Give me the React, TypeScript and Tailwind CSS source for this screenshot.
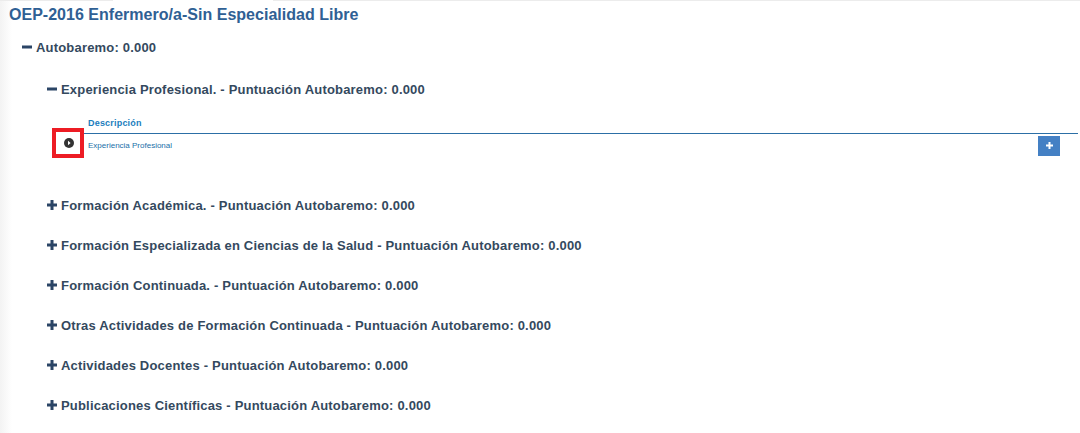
const sections = [
  'Formación Académica. - Puntuación Autobaremo: 0.000',
  'Formación Especializada en Ciencias de la Salud - Puntuación Autobaremo: 0.000',
  'Formación Continuada. - Puntuación Autobaremo: 0.000',
  'Otras Actividades de Formación Continuada - Puntuación Autobaremo: 0.000',
  'Actividades Docentes - Puntuación Autobaremo: 0.000',
  'Publicaciones Científicas - Puntuación Autobaremo: 0.000',
];

function Heading({ open, text }: { open?: boolean; text: string }) {
  return (
    <div className="flex items-center h-5 gap-[4px] text-[13px] font-bold tracking-[0.19px] text-[#34495e]">
      <svg viewBox="0 0 10 10" className="w-[10px] h-[10px] mb-[2px] shrink-0" fill="#2b4566">
        <rect x="0" y="3.5" width="10" height="3" />
        {!open && <rect x="3.5" y="0" width="3" height="10" />}
      </svg>
      <span>{text}</span>
    </div>
  );
}

export default function App() {
  return (
    <div className="w-[1080px] h-[433px] overflow-hidden bg-white bg-[linear-gradient(to_right,#f3f3f3,#ffffff_12px)] font-['Liberation_Sans',Arial,sans-serif]">
      <div className="flex h-[1px]">
        <div className="w-[113px] bg-[#ececec]" />
        <div className="w-[160px]" />
        <div className="flex-1 bg-[#ececec]" />
      </div>
      <div className="pl-[9px] pt-[4px] text-[16px] leading-5 font-bold tracking-[0.02px] text-[#2f6094]">
        OEP-2016 Enfermero/a-Sin Especialidad Libre
      </div>

      <div className="pl-[22px] pt-[13px]">
        <Heading open text="Autobaremo: 0.000" />

        <div className="pl-[25px] pt-[22px]">
          <Heading open text="Experiencia Profesional. - Puntuación Autobaremo: 0.000" />

          {/* tabla */}
          <div className="pt-[15px]">
            <div className="pl-[41px] h-[18px] text-[9px] leading-[16px] font-bold tracking-[0.2px] text-[#1a7dbd]">
              Descripción
            </div>
            <div className="ml-[6px] mr-[2px] h-[1px] bg-[#2c6fa6]" />
            <div className="flex items-start h-[62px]">
              <div className="relative w-[41px] shrink-0 h-[24px]">
                <div className="absolute left-[5px] -top-[6px] w-[32px] h-[30px] pl-[1px] border-[4px] border-[#ed1c24] flex items-center justify-center bg-white">
                  <svg viewBox="0 0 10 10" className="w-[10px] h-[10px]">
                    <circle cx="5" cy="5" r="5" fill="#333" />
                    <path d="M4 2.8 L6.6 5 L4 7.2 Z" fill="#fff" />
                  </svg>
                </div>
              </div>
              <div className="pt-[7px] text-[8px] leading-[10px] text-[#1a6fa8]">Experiencia Profesional</div>
              <div className="ml-auto mr-[20px] mt-[2px] w-[22px] h-[20px] bg-[#4480c4] flex items-center justify-center">
                <svg viewBox="0 0 7 7" className="w-[7px] h-[7px] mb-[2px]" fill="#fff">
                  <rect x="0" y="2.5" width="7" height="2" />
                  <rect x="2.5" y="0" width="2" height="7" />
                </svg>
              </div>
            </div>
          </div>

          <div className="flex flex-col gap-[20px]">
            {sections.map((s) => (
              <Heading key={s} text={s} />
            ))}
          </div>
        </div>
      </div>
    </div>
  );
}
